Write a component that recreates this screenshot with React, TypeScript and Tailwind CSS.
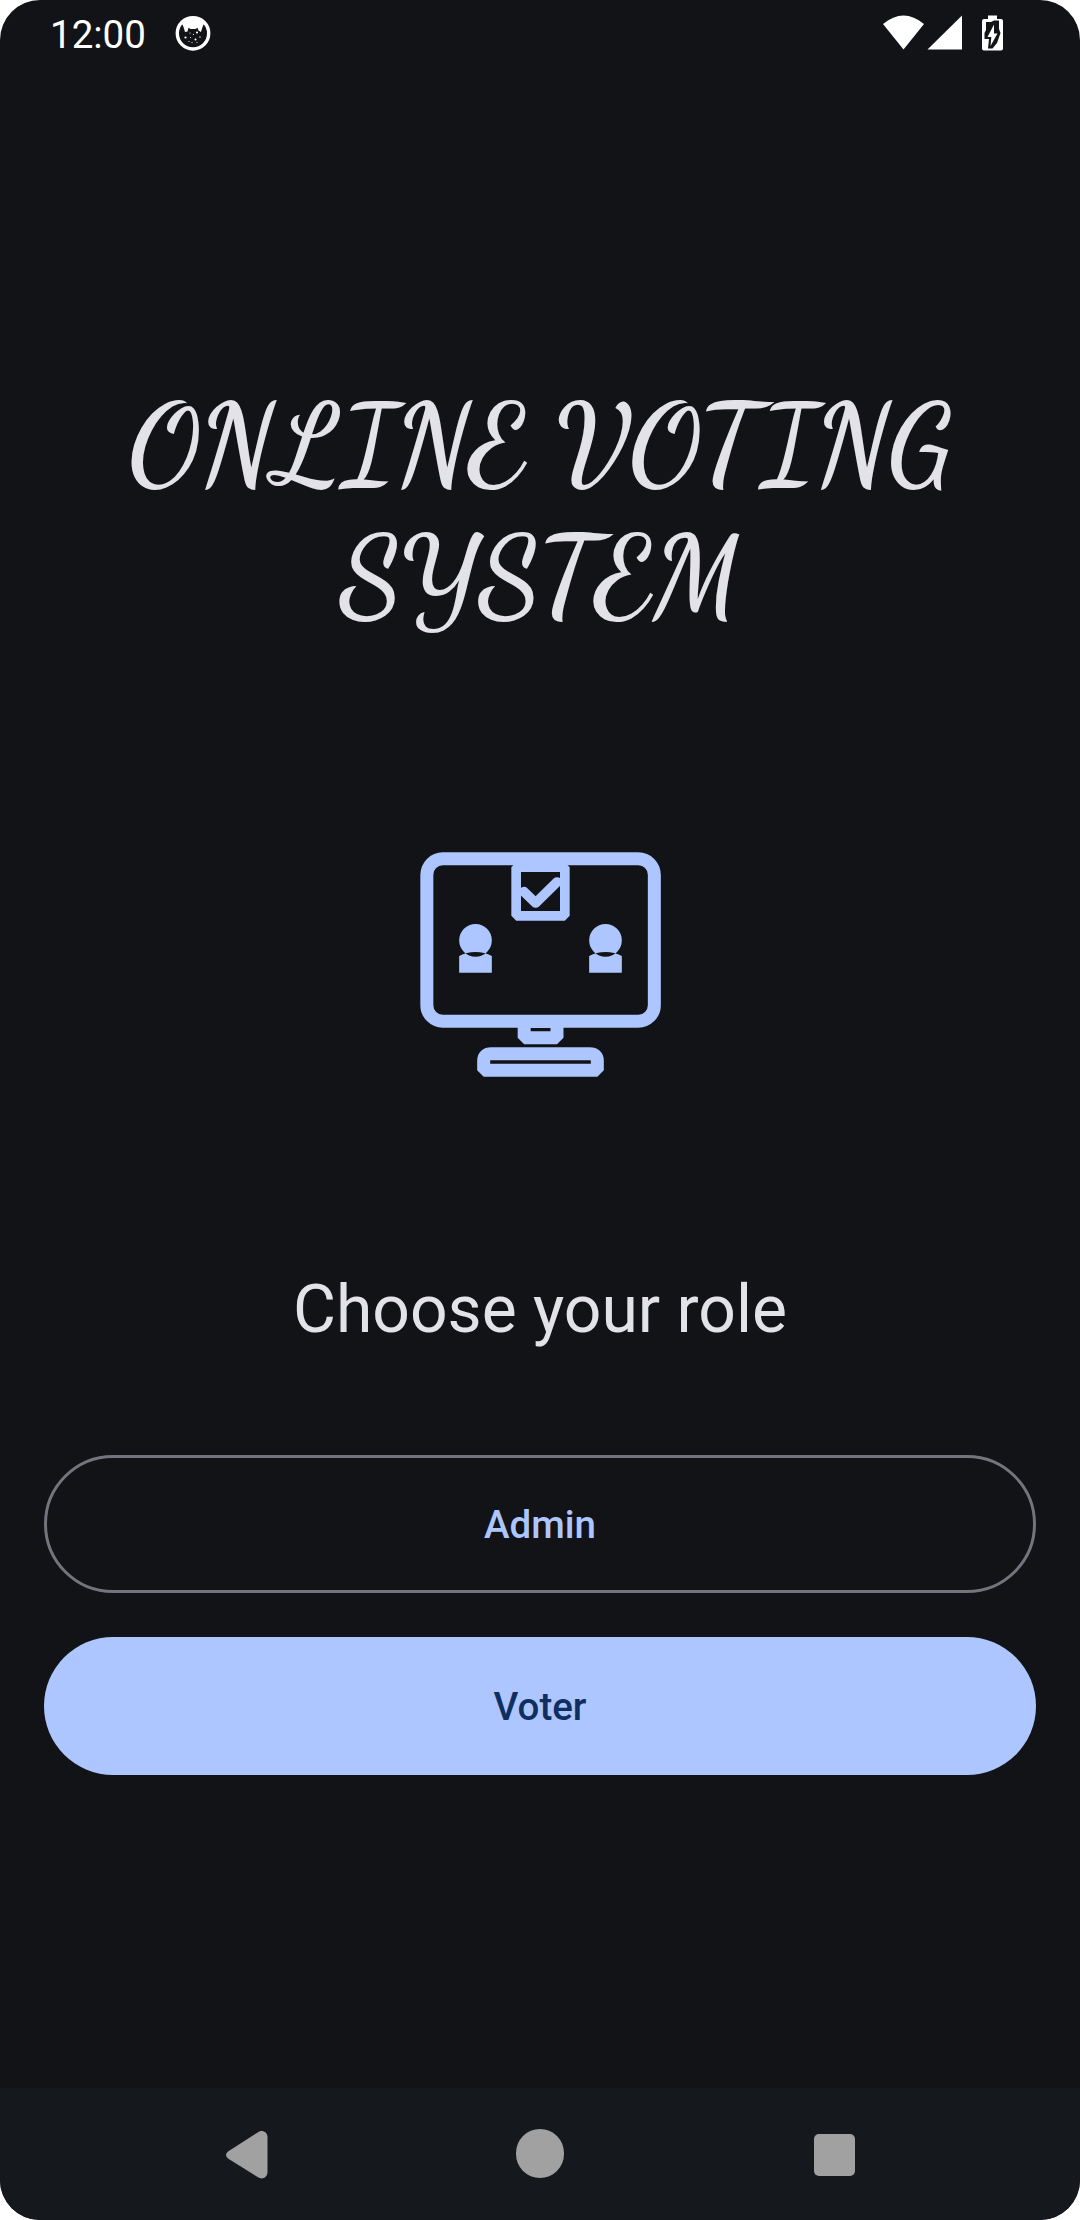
import React from "react";

function CatIcon() {
  return (
    <svg width="36" height="36" viewBox="0 0 36 36" className="ml-[31px]">
      <circle cx="18" cy="18.300" r="15.700" fill="none" stroke="#fff" strokeWidth="3.4" />
      <path d="M5 9Q18-5 31 9L28.500 9.500L27 13.500L26 17L23.500 15.500L22.500 12.800L20.500 14H15.500L13.500 12.800L12.500 16.500L10 17L9 13.500L7.500 9.500Z" fill="#fff" />
      <g fill="#fff">
        <circle cx="22" cy="17.500" r="1.1" />
        <circle cx="10.500" cy="22.500" r="1.1" />
        <circle cx="20.500" cy="24.500" r="1" />
        <circle cx="15" cy="18" r=".6" />
        <circle cx="18.500" cy="19.500" r=".6" />
        <circle cx="14" cy="26.500" r=".6" />
        <circle cx="25" cy="22" r=".7" />
        <circle cx="17" cy="27.500" r=".6" />
        <circle cx="22" cy="27.500" r=".5" />
        <circle cx="15.500" cy="22.500" r=".5" />
      </g>
    </svg>
  );
}

function StatusBar() {
  return (
    <header className="flex h-[66px] items-start justify-between pl-[50px] pr-[75px] text-white">
      <div className="flex items-start pt-[15px]">
        <span className="h-[36px] w-[94px] whitespace-nowrap pt-px text-[38.5px] leading-[38px]">12:00</span>
        <CatIcon />
      </div>
      <svg width="122" height="38" viewBox="0 0 122 38" className="mt-[14px]" fill="#fff">
        <path d="M0 10Q20.500-7 41 10L20.500 35.500Z" />
        <path d="M44.500 35.500L79 1.500V35.500Z" />
        <path
          fillRule="evenodd"
          d="M105 1.500H114V5H118Q120 5 120 7V34.500Q120 36.500 118 36.500H101Q99 36.500 99 34.500V7Q99 5 101 5H105Z"
        />
        <path d="M103 8H108L111 6.500H116V15L117.500 19L114 29L109.500 34.500H105L106 25H101.500V19L103 16Z" fill="#121316" />
        <path d="M111 10.500L104.500 23H108.300L107.500 32L114.500 19.500H111Z" />
      </svg>
    </header>
  );
}

function Person({ x }: { x: number }) {
  return (
    <path
      transform={`translate(${x} 0)`}
      fill="#adc6ff"
      fillRule="evenodd"
      d="M0 331A49 49 0 1 1 98 331A49 49 0 1 1 0 331ZM0 378Q22 366 49 366Q76 366 98 378V428H0Z"
    />
  );
}

function VotingMonitor() {
  return (
    <svg width="280" height="260" viewBox="0 0 840 780" className="mt-[180px] shrink-0" fill="none" stroke="#adc6ff">
      <rect x="80.500" y="86.500" width="682.500" height="487" rx="48" strokeWidth="39" />
      <path d="M348.500 111.500H494.500V257.500H348.500Z" strokeWidth="29" strokeLinejoin="bevel" />
      <path d="M372 185L407 219L471 156" strokeWidth="29" strokeLinecap="round" strokeLinejoin="round" />
      <path d="M372.500 574.500H471V623.500H372.500Z" strokeWidth="39" strokeLinejoin="bevel" />
      <path d="M251 720.500V692Q251 671.500 274 671.500H569Q592 671.500 592 692V720.500Z" strokeWidth="39" strokeLinejoin="bevel" />
      <g stroke="none">
        <Person x={177.500} />
        <Person x={567.500} />
      </g>
    </svg>
  );
}

function NavigationBar() {
  return (
    <nav className="grid h-[132px] shrink-0 grid-cols-[247px_586px_247px] bg-[#15181c]">
      <div className="pl-[226px] pt-[43px]">
        <svg width="42" height="48" viewBox="0 0 42 48" fill="#a1a1a2">
          <path d="M2 20.500L32 1.200C36-1.500 41.500 1 41.500 6V41C41.500 46.500 36 49 32 46.300L2 27.500Q-2 24 2 20.500Z" />
        </svg>
      </div>
      <div className="flex justify-center pt-[41px]">
        <span className="h-[49px] w-[48px] rounded-full bg-[#a1a1a2]" />
      </div>
      <div className="-ml-[19px] pt-[46px]">
        <div className="h-[42px] w-[41px] rounded-[5px] bg-[#a1a1a2]" />
      </div>
    </nav>
  );
}

export default function App() {
  return (
    <div className="h-[2220px] w-[1080px] overflow-hidden bg-white">
      <div className="flex h-full flex-col overflow-hidden rounded-[40px] bg-[#121316] font-['Roboto',sans-serif]">
        <StatusBar />
        <main className="flex flex-1 flex-col items-center px-[44px] text-[#e3e2e8]">
          <h1 className="mt-[313px] flex h-[271px] flex-col items-center whitespace-nowrap font-['Dancing_Script',cursive] text-[110px] font-bold leading-[132px]">
            <span>ONLINE VOTING</span>
            <span>SYSTEM</span>
          </h1>
          <VotingMonitor />
          <h2 className="mt-[181px] h-[78px] whitespace-nowrap text-[66px] leading-[78px]">Choose your role</h2>
          <button className="mt-[106px] h-[138px] w-full rounded-full border-[3px] border-[#74747d] pt-[2px] text-[38.5px] font-medium text-[#adc6ff]">
            Admin
          </button>
          <button className="mt-[44px] h-[138px] w-full rounded-full bg-[#adc6ff] pt-[2px] text-[38.5px] font-medium text-[#102f60]">
            Voter
          </button>
        </main>
        <NavigationBar />
      </div>
    </div>
  );
}
